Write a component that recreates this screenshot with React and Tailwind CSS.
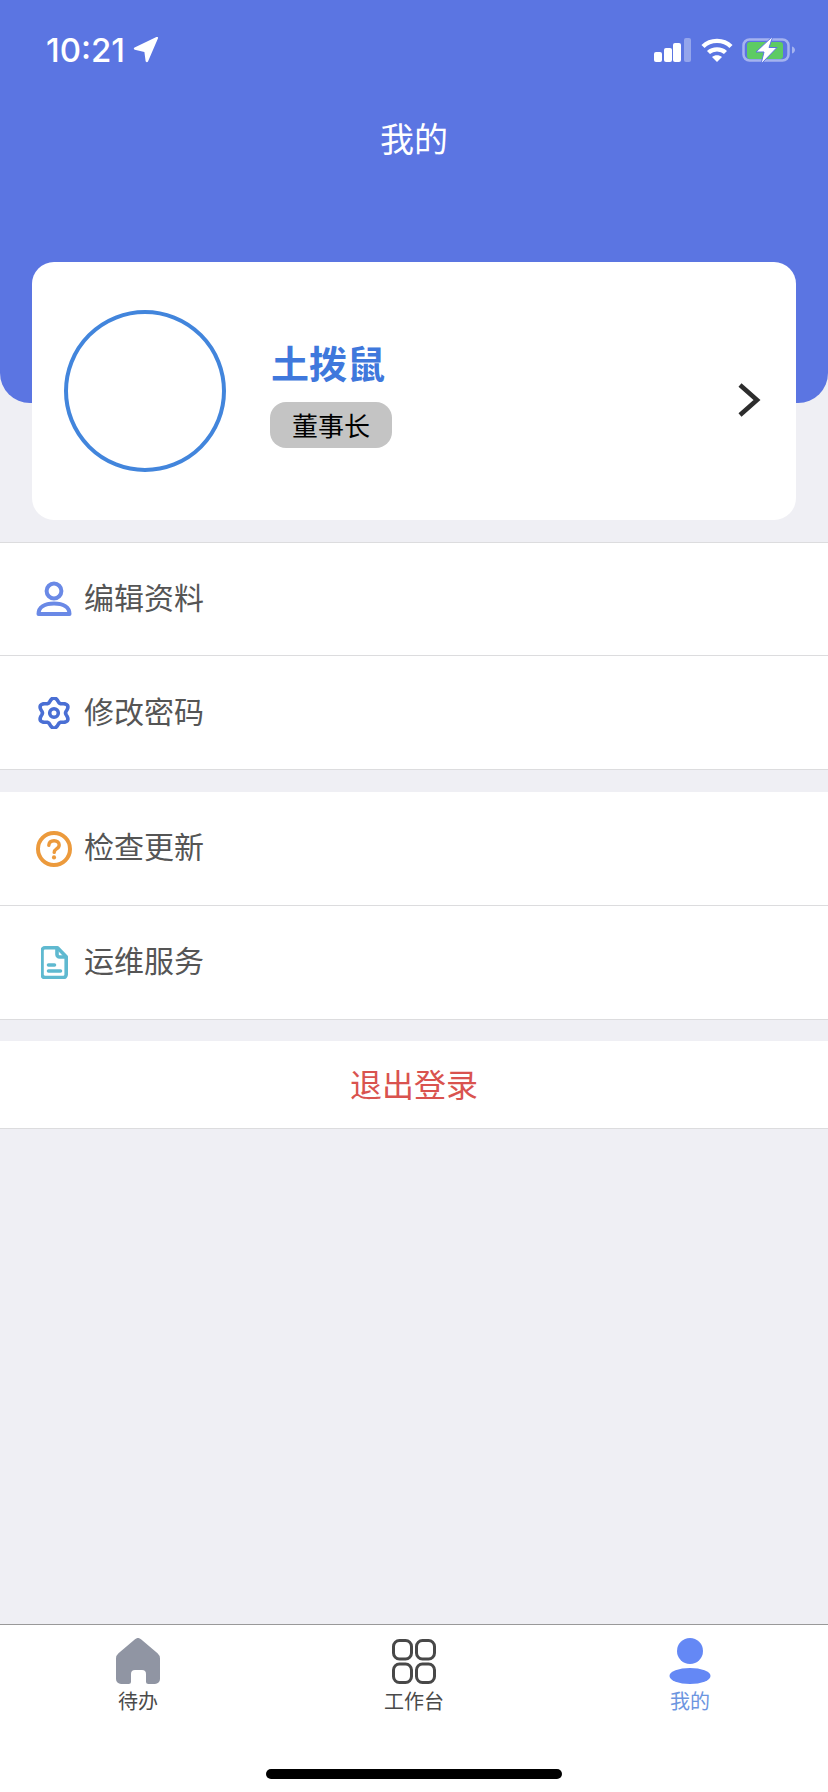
import React from "react";

const CJK = { fontFamily: '"Noto Sans CJK SC", "Noto Sans", sans-serif' };

function gearPath() {
  const pts = [];
  for (let i = 0; i < 120; i++) {
    const t = (i / 120) * Math.PI * 2;
    const r = 13.3 + 2.0 * Math.cos(6 * (t + Math.PI / 2));
    pts.push(`${(17 + r * Math.cos(t) * 1.02).toFixed(2)} ${(16 + r * Math.sin(t) * 0.98).toFixed(2)}`);
  }
  return "M" + pts.join("L") + "Z";
}

function UserIcon() {
  return (
    <svg width="36" height="36" viewBox="0 0 36 36" fill="none" stroke="#6a89e6" strokeWidth="4">
      <circle cx="18" cy="10" r="7.400" />
      <path d="M2.500 33c0-7 6.200-10.500 15.500-10.500S33.500 26 33.500 33z" strokeLinejoin="round" />
    </svg>
  );
}
function GearIcon() {
  return (
    <svg width="34" height="32" viewBox="0 0 34 32" fill="none" stroke="#4a6fd4" strokeWidth="3.600">
      <path d={gearPath()} strokeLinejoin="round" />
      <circle cx="17" cy="16" r="4.300" />
    </svg>
  );
}
function HelpIcon() {
  return (
    <svg width="36" height="36" viewBox="0 0 36 36" fill="none">
      <circle cx="18" cy="18" r="16" stroke="#ec9a3c" strokeWidth="4" />
      <path d="M12.800 14.400c.2-3 2.400-4.700 5.300-4.700s5.100 1.700 5.100 4.200c0 2-1.200 3-2.700 4-1.500 1-2.300 1.900-2.300 3.500" stroke="#ec9a3c" strokeWidth="3.400" strokeLinecap="round" />
      <circle cx="18" cy="26.400" r="2.100" fill="#ec9a3c" />
    </svg>
  );
}
function DocIcon() {
  return (
    <svg width="27" height="33" viewBox="0 0 27 33" fill="none" stroke="#5fb9d0" strokeWidth="3.600">
      <path d="M4 1.800h12.500l8.700 9V28.500a3 3 0 0 1-3 3H4a3 3 0 0 1-3-3V4.800a3 3 0 0 1 3-3z" strokeLinejoin="round" />
      <path d="M16 3v5.500a2.500 2.500 0 0 0 2.500 2.500H25" strokeLinejoin="round" />
      <path d="M7.500 19h6M7.500 25h12" strokeLinecap="round" />
    </svg>
  );
}
function HomeIcon() {
  return (
    <svg width="44" height="46" viewBox="0 0 44 46">
      <path
        fill="#9095a3"
        d="M19 1.300a4.500 4.500 0 0 1 6 0l16.500 14a7 7 0 0 1 2.500 5.300V41a5 5 0 0 1-5 5h-6.500a2.500 2.500 0 0 1-2.500-2.500V36a4 4 0 0 0-4-4h-7a4 4 0 0 0-4 4v7.500a2.500 2.500 0 0 1-2.500 2.500H5a5 5 0 0 1-5-5V20.600a7 7 0 0 1 2.500-5.300z"
      />
    </svg>
  );
}
function GridIcon() {
  return (
    <svg width="44" height="45" viewBox="0 0 44 45" fill="none" stroke="#484848" strokeWidth="3">
      <rect x="1.500" y="1.500" width="18" height="18.500" rx="6" />
      <rect x="24.500" y="1.500" width="18" height="18.500" rx="6" />
      <rect x="1.500" y="25" width="18" height="18.500" rx="6" />
      <rect x="24.500" y="25" width="18" height="18.500" rx="6" />
    </svg>
  );
}
function MeIcon() {
  return (
    <svg width="44" height="46" viewBox="0 0 44 46" fill="#6488f5">
      <circle cx="22" cy="13" r="13" />
      <ellipse cx="22" cy="38" rx="20.500" ry="8" />
    </svg>
  );
}

function Row({ icon, label, tall, raised }) {
  return (
    <div className={`flex items-center border-b border-[#dcdcde] bg-white pl-9 ${tall ? "h-[114px]" : "h-[113px]"}`}>
      <div className="flex w-[48px] shrink-0 items-center justify-center pr-[12px]">{icon}</div>
      <span className={`text-[30px] leading-none text-[#555555] ${raised ? "-mt-[8px]" : "-mt-[6px]"}`}>{label}</span>
    </div>
  );
}

function Tab({ icon, label, active }) {
  return (
    <div className="flex flex-1 flex-col items-center">
      <div className="flex h-[46px] items-center justify-center">{icon}</div>
      <span className={`mt-[6px] text-[20px] leading-[22px] ${active ? "text-[#6c95e0]" : "text-[#4a4a4a]"}`}>{label}</span>
    </div>
  );
}

export default function App() {
  return (
    <div className="flex h-[1792px] w-full flex-col bg-[#efeff4]" style={CJK}>
      <header className="h-[403px] shrink-0 rounded-b-[30px] bg-[#5b75e2] px-[46px] pt-[36px]">
        <div className="flex h-[28px] items-center justify-between">
          <div className="flex items-center gap-[8px] text-white">
            <span className="text-[33px] font-medium leading-none" style={{ fontFamily: "Inter, sans-serif" }}>10:21</span>
            <svg width="26" height="26" viewBox="0 0 26 26" fill="white">
              <path d="M25 1.200 15 24.400c-.5 1.200-2.200 1-2.400-.3L11.400 15 1.800 12.800C.6 12.500.4 10.900 1.600 10.400L23.400.1c1-.5 2 .2 1.600 1.100z" />
            </svg>
          </div>
          <div className="-mr-[14px] flex items-center gap-[9px]">
            <svg width="38" height="24" viewBox="0 0 38 24" fill="white">
              <rect x="0" y="14" width="8" height="10" rx="2" />
              <rect x="10" y="10" width="8" height="14" rx="2" />
              <rect x="19" y="5" width="8" height="19" rx="2" />
              <rect x="30" y="0" width="7" height="24" rx="2" fillOpacity="0.35" />
            </svg>
            <svg width="32" height="24" viewBox="0 0 32 24" fill="none" stroke="white" strokeWidth="4.400">
              <path d="M2 8.500C9.500 1 22.500 1 30 8.500" />
              <path d="M7.500 14.500c4.500-4.200 12.500-4.200 17 0" />
              <path d="M16 24 11 19c2.800-2.200 7.200-2.200 10 0z" fill="white" stroke="none" />
            </svg>
            <svg width="54" height="28" viewBox="0 0 54 28" fill="none">
              <rect x="1.500" y="3.500" width="45" height="21" rx="6" stroke="white" strokeOpacity="0.45" strokeWidth="2.500" />
              <rect x="5" y="6" width="36" height="17" rx="3" fill="#5dcb63" />
              <path d="M50 10.500c2 .6 3 2 3 3.500s-1 2.900-3 3.500z" fill="white" fillOpacity="0.45" />
              <path d="M31 0 14 16h8l-3 12 16-16.500h-8z" fill="white" stroke="#5b75e2" strokeWidth="1" />
            </svg>
          </div>
        </div>
        <h1 className="mt-[55px] text-center text-[34px] font-normal leading-[38px] text-white">我的</h1>
      </header>

      <section className="relative mx-8 -mt-[141px] flex h-[258px] shrink-0 items-center rounded-[22px] bg-white pl-8 pr-[36px]">
        <div className="h-[162px] w-[162px] shrink-0 rounded-full border-4 border-[#4285dc]" />
        <div className="ml-[44px] mt-[6px] flex-1">
          <div className="pl-[1px] text-[38px] font-bold leading-[44px] text-[#3f78dc]">土拨鼠</div>
          <div className="mt-[18px] flex h-[46px] w-[122px] items-center justify-center rounded-[16px] bg-[#c4c4c4] text-[26px] leading-none text-black">董事长</div>
        </div>
        <svg width="24" height="34" viewBox="0 0 24 34" fill="none" stroke="#2d2d2d" strokeWidth="4.600" className="mt-[17px] -mr-[1px]">
          <path d="M3 2l17 15L3 32" />
        </svg>
      </section>

      <div className="mt-[22px] border-t border-[#dcdcde]">
        <Row icon={<UserIcon />} label="编辑资料" />
        <Row icon={<GearIcon />} label="修改密码" tall />
      </div>
      <div className="mt-[22px]">
        <Row icon={<HelpIcon />} label="检查更新" tall raised />
        <Row icon={<DocIcon />} label="运维服务" tall raised />
      </div>
      <div className="mt-[21px] flex h-[88px] items-center justify-center border-b border-[#dcdcde] bg-white pb-[3px] text-[32px] leading-none text-[#d9534f]">
        退出登录
      </div>

      <div className="flex-1" />

      <footer className="flex h-[168px] shrink-0 flex-col border-t border-[#999999] bg-white pt-[13px]">
        <div className="flex">
          <Tab icon={<HomeIcon />} label="待办" />
          <Tab icon={<GridIcon />} label="工作台" />
          <Tab icon={<MeIcon />} label="我的" active />
        </div>
        <div className="mx-auto mt-[57px] h-[10px] w-[296px] rounded-full bg-black" />
      </footer>
    </div>
  );
}
